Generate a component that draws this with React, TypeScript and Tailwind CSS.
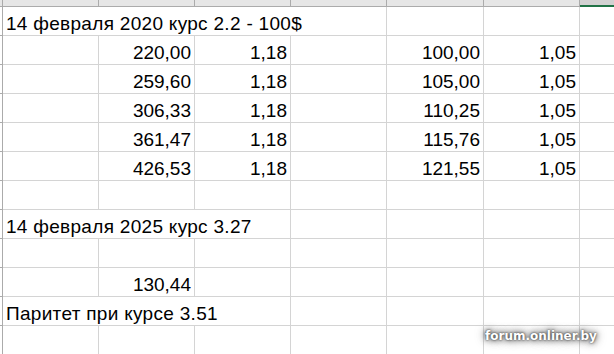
import React from "react";

type CellDef = { w: string; text?: string; align?: "left" | "right" };

const empty6 = (): CellDef[] => [
  { w: "w-[96px]" },
  { w: "w-[96px]" },
  { w: "w-[96px]" },
  { w: "w-[96px]" },
  { w: "w-[97px]" },
  { w: "w-[96px]" },
];

const numRow = (b: string, c: string, e: string, f: string): CellDef[] => [
  { w: "w-[96px]" },
  { w: "w-[96px]", text: b, align: "right" },
  { w: "w-[96px]", text: c, align: "right" },
  { w: "w-[96px]" },
  { w: "w-[97px]", text: e, align: "right" },
  { w: "w-[96px]", text: f, align: "right" },
];

const rows: CellDef[][] = [
  [
    { w: "w-[384px]", text: "14 февраля 2020 курс 2.2 - 100$", align: "left" },
    { w: "w-[97px]" },
    { w: "w-[96px]" },
  ],
  numRow("220,00", "1,18", "100,00", "1,05"),
  numRow("259,60", "1,18", "105,00", "1,05"),
  numRow("306,33", "1,18", "110,25", "1,05"),
  numRow("361,47", "1,18", "115,76", "1,05"),
  numRow("426,53", "1,18", "121,55", "1,05"),
  empty6(),
  [
    { w: "w-[288px]", text: "14 февраля 2025 курс 3.27", align: "left" },
    { w: "w-[96px]" },
    { w: "w-[97px]" },
    { w: "w-[96px]" },
  ],
  empty6(),
  [
    { w: "w-[96px]" },
    { w: "w-[96px]", text: "130,44", align: "right" },
    { w: "w-[96px]" },
    { w: "w-[96px]" },
    { w: "w-[97px]" },
    { w: "w-[96px]" },
  ],
  [
    { w: "w-[288px]", text: "Паритет при курсе 3.51", align: "left" },
    { w: "w-[96px]" },
    { w: "w-[97px]" },
    { w: "w-[96px]" },
  ],
  empty6(),
];

const Cell = ({ w, text, align }: CellDef) => (
  <div
    className={`${w} h-[29px] shrink-0 flex items-end border-r border-b border-[#d4d4d4] whitespace-nowrap leading-[22px] ${
      align === "right"
        ? "justify-end pr-[3px]"
        : "justify-start pl-[3px] tracking-[0.3px]"
    }`}
  >
    {text}
  </div>
);

export default function App() {
  return (
    <div className="relative w-[614px] h-[354px] overflow-hidden bg-white text-black font-['Liberation_Sans',Arial,sans-serif] text-[19px]">
      {/* column header strip */}
      <div className="flex h-[7px]">
        <div className="w-[3px] h-[7px] shrink-0 border-r border-b border-[#ababab] bg-[#e6e6e6]" />
        <div className="w-[96px] h-[7px] shrink-0 bg-[#e6e6e6] border-r border-b border-[#ababab]" />
        <div className="w-[96px] h-[7px] shrink-0 bg-[#e6e6e6] border-r border-b border-[#ababab]" />
        <div className="w-[96px] h-[7px] shrink-0 bg-[#e6e6e6] border-r border-b border-[#ababab]" />
        <div className="w-[96px] h-[7px] shrink-0 bg-[#e6e6e6] border-r border-b border-[#ababab]" />
        <div className="w-[97px] h-[7px] shrink-0 bg-[#e6e6e6] border-r border-b border-[#ababab]" />
        <div className="w-[96px] h-[7px] shrink-0 bg-[#e6e6e6] border-r border-b border-[#ababab]" />
        <div className="flex-1 h-[7px] bg-[#d2d2d2] border-b-2 border-[#217346]" />
      </div>

      {rows.map((cells, i) => (
        <div key={i} className="flex">
          <div className="w-[3px] h-[29px] shrink-0 border-r border-b border-[#ababab]" />
          {cells.map((c, j) => (
            <Cell key={j} {...c} />
          ))}
          <div className="flex-1 h-[29px] border-b border-[#d4d4d4]" />
        </div>
      ))}

      {/* watermark */}
      <div className="absolute left-[484px] top-[327px] px-[1px] text-white font-bold text-[12px] leading-[18px] font-['DejaVu_Sans',Verdana,sans-serif] [text-shadow:0_0_2px_#333,0_0_5px_#555,0_0_8px_#888,0_0_12px_#aaa]">
        forum.onliner.by
      </div>
    </div>
  );
}
